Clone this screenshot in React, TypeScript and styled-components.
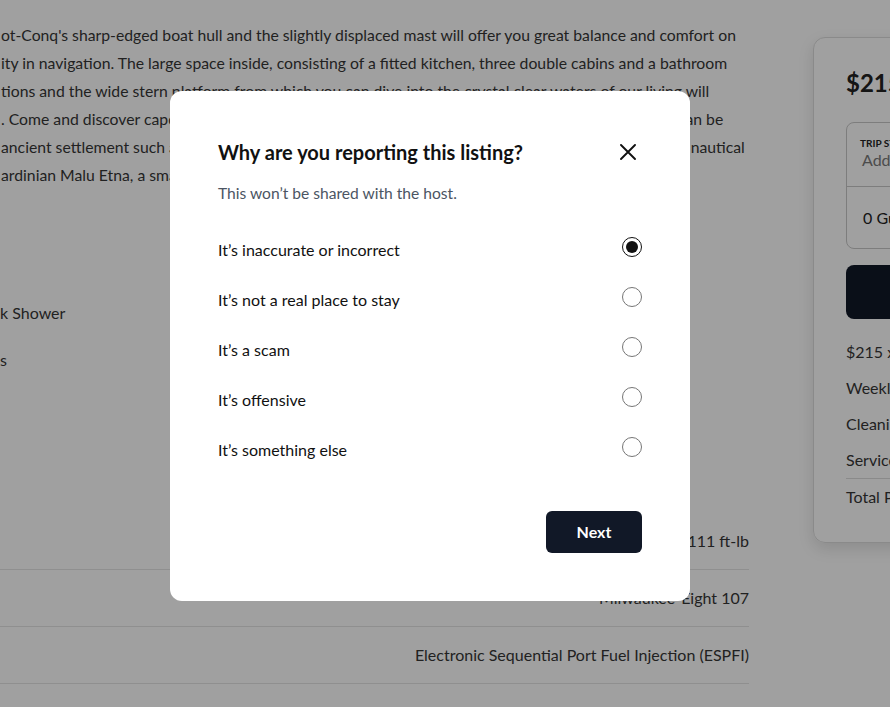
import { useState } from 'react';
import styled, { createGlobalStyle } from 'styled-components';

const GlobalStyle = createGlobalStyle`
  html, body {
    margin: 0;
    padding: 0;
    background: #ffffff;
    overflow: hidden;
  }
  body {
    font-family: Lato, 'Noto Sans', sans-serif;
    color: #363636;
  }
  * {
    box-sizing: border-box;
  }
`;

const descriptionLines = [
  "ot-Conq's sharp-edged boat hull and the slightly displaced mast will offer you great balance and comfort on",
  'ity in navigation. The large space inside, consisting of a fitted kitchen, three double cabins and a bathroom',
  'tions and the wide stern platform from which you can dive into the crystal clear waters of our living will',
  '. Come and discover capo Caccia and all its beautiful coves, wild beaches and crystal waters which can be',
  "ancient settlement such as the nuraghe of Sant'Antine, or join one of our unforgettable sea trips and nautical",
  'ardinian Malu Etna, a small island with pristine waters.',
];

const specs = ['111 ft-lb', 'Milwaukee-Eight 107', 'Electronic Sequential Port Fuel Injection (ESPFI)'];

const reasons = [
  'It’s inaccurate or incorrect',
  'It’s not a real place to stay',
  'It’s a scam',
  'It’s offensive',
  'It’s something else',
];

const fees = ['$215 x 7 nights', 'Weekly discount', 'Cleaning fee', 'Service fee'];

const App = () => {
  const [reason, setReason] = useState(0);

  return (
    <>
      <GlobalStyle />
      <Page>
        <Main>
          <Description>
            {descriptionLines.map((line) => (
              <Line key={line}>{line}</Line>
            ))}
          </Description>

          <Amenities>
            <Amenity>k Shower</Amenity>
            <Amenity>s</Amenity>
          </Amenities>

          <Specs>
            {specs.map((value) => (
              <SpecRow key={value}>
                <SpecValue>{value}</SpecValue>
              </SpecRow>
            ))}
          </Specs>
        </Main>

        <BookingCard>
          <Price>$215</Price>
          <TripBox>
            <TripField>
              <FieldLabel>Trip start</FieldLabel>
              <FieldPlaceholder>Add date</FieldPlaceholder>
            </TripField>
            <TripField $guests>
              <FieldValue>0 Guests</FieldValue>
            </TripField>
          </TripBox>
          <ReserveButton>Reserve</ReserveButton>
          <FeeList>
            {fees.map((fee) => (
              <FeeRow key={fee}>{fee}</FeeRow>
            ))}
          </FeeList>
          <TotalRow>Total Price</TotalRow>
        </BookingCard>
      </Page>

      <Overlay>
        <Modal role="dialog" aria-modal="true">
          <ModalHeader>
            <ModalTitle>Why are you reporting this listing?</ModalTitle>
            <CloseButton aria-label="Close">
              <svg width="16" height="16" viewBox="0 0 16 16" fill="none">
                <path d="M1 1L15 15M15 1L1 15" stroke="#111111" strokeWidth="1.9" strokeLinecap="round" />
              </svg>
            </CloseButton>
          </ModalHeader>
          <ModalSubtitle>This won’t be shared with the host.</ModalSubtitle>

          <Options>
            {reasons.map((text, index) => (
              <Option key={text}>
                <span>{text}</span>
                <Radio
                  type="radio"
                  name="reason"
                  checked={reason === index}
                  onChange={() => setReason(index)}
                />
              </Option>
            ))}
          </Options>

          <ModalFooter>
            <NextButton>Next</NextButton>
          </ModalFooter>
        </Modal>
      </Overlay>
    </>
  );
};

const Page = styled.div`
  display: flex;
  align-items: flex-start;
  gap: 64px;
  padding-top: 21px;
  width: 1250px;
`;

const Main = styled.main`
  width: 749px;
  flex-shrink: 0;
`;

const Description = styled.div`
  font-size: 15.75px;
  line-height: 28px;
`;

const Line = styled.div`
  white-space: nowrap;
  padding-left: 1px;
`;

const Amenities = styled.ul`
  list-style: none;
  margin: 112px 0 0;
  padding: 0;
  display: flex;
  flex-direction: column;
  gap: 23px;
`;

const Amenity = styled.li`
  font-size: 16px;
  line-height: 24px;
`;

const Specs = styled.div`
  margin-top: 141px;
`;

const SpecRow = styled.div`
  height: 57px;
  display: flex;
  align-items: center;
  justify-content: flex-end;
  border-bottom: 1px solid #e4e4e4;
`;

const SpecValue = styled.span`
  font-size: 16px;
  margin-top: -1px;
`;

const BookingCard = styled.aside`
  width: 400px;
  flex-shrink: 0;
  margin-top: 16px;
  padding: 31px 32px 35px;
  border: 1px solid #dcdcdc;
  border-radius: 12px;
  box-shadow: 0 6px 16px rgba(0, 0, 0, 0.12);
`;

const Price = styled.div`
  font-size: 24px;
  font-weight: 700;
  line-height: 28px;
  color: #222222;
`;

const TripBox = styled.div`
  margin-top: 25px;
  border: 1px solid #c8c8c8;
  border-radius: 8px;
`;

const TripField = styled.div<{ $guests?: boolean }>`
  height: ${(p) => (p.$guests ? '62px' : '63px')};
  padding: ${(p) => (p.$guests ? '0 15px 0 16px' : '13px 13px 0')};
  display: flex;
  flex-direction: column;
  justify-content: ${(p) => (p.$guests ? 'center' : 'flex-start')};
  border-top: ${(p) => (p.$guests ? '1px solid #c8c8c8' : 'none')};
`;

const FieldLabel = styled.div`
  font-size: 10px;
  font-weight: 700;
  text-transform: uppercase;
  color: #222222;
  line-height: 14px;
`;

const FieldPlaceholder = styled.div`
  font-size: 16px;
  color: #7a7a7a;
  line-height: 20px;
  padding-left: 2px;
`;

const FieldValue = styled.div`
  font-size: 16px;
  color: #222222;
`;

const ReserveButton = styled.button`
  margin-top: 16px;
  width: 100%;
  height: 54px;
  border: none;
  border-radius: 8px;
  background: #111827;
  color: #ffffff;
  font-family: inherit;
  font-size: 16px;
  font-weight: 700;
`;

const FeeList = styled.div`
  margin-top: 23px;
  display: flex;
  flex-direction: column;
  gap: 16px;
`;

const FeeRow = styled.div`
  font-size: 16px;
  line-height: 20px;
`;

const TotalRow = styled.div`
  margin-top: 8px;
  padding-top: 8px;
  border-top: 1px solid #dcdcdc;
  font-size: 16px;
  line-height: 20px;
`;

const Overlay = styled.div`
  position: fixed;
  inset: 0;
  background: rgba(0, 0, 0, 0.373);
  display: flex;
  align-items: center;
  justify-content: center;
  padding: 0 30px 16px 0;
`;

const Modal = styled.div`
  width: 520px;
  background: #ffffff;
  border-radius: 12px;
  padding: 48px;
  color: #111111;
`;

const ModalHeader = styled.div`
  display: flex;
  align-items: center;
  justify-content: space-between;
  margin-top: -1px;
`;

const ModalTitle = styled.h2`
  margin: 0;
  font-size: 20px;
  line-height: 28px;
  font-weight: 700;
  color: #111111;
`;

const CloseButton = styled.button`
  width: 28px;
  height: 28px;
  padding: 0;
  border: none;
  background: none;
  display: flex;
  align-items: center;
  justify-content: center;
  cursor: pointer;
`;

const ModalSubtitle = styled.p`
  margin: 16px 0 0;
  font-size: 15.6px;
  line-height: 22px;
  color: #4b5563;
`;

const Options = styled.div`
  margin-top: 21px;
  display: flex;
  flex-direction: column;
`;

const Option = styled.label`
  height: 50px;
  display: flex;
  align-items: center;
  justify-content: space-between;
  font-size: 16px;
  color: #111111;
  cursor: pointer;
`;

const Radio = styled.input`
  width: 20px;
  height: 20px;
  margin: 0 0 5px;
  accent-color: #111111;
  cursor: pointer;
`;

const ModalFooter = styled.div`
  margin-top: 36px;
  display: flex;
  justify-content: flex-end;
`;

const NextButton = styled.button`
  width: 96px;
  height: 42px;
  border: none;
  border-radius: 6px;
  background: #111827;
  color: #ffffff;
  font-family: inherit;
  font-size: 16px;
  font-weight: 700;
  cursor: pointer;
`;

export default App;
